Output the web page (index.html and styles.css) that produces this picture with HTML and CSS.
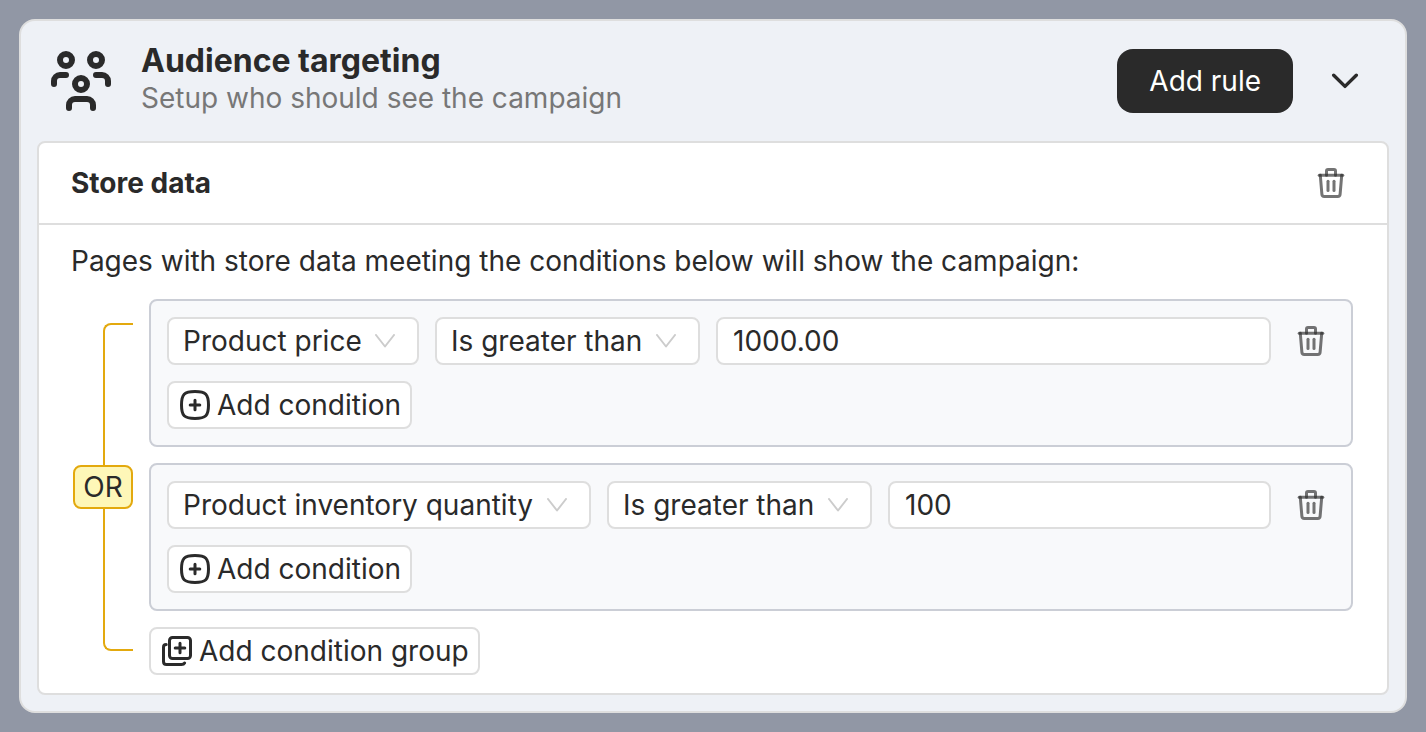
FILE: index.html
```
<!DOCTYPE html>
<html lang="en">
  <head>
    <meta charset="utf-8">
    <title>Audience targeting</title>
    <link rel="stylesheet" href="styles.css">
  </head>
  <body>

    <!-- shared icons -->
    <svg class="sprite" aria-hidden="true">
      <symbol id="icon-trash" viewBox="0 0 32 32">
        <path d="M4.2 8.3H27.8"></path>
        <path d="M11.5 8.3V4Q11.5 2.5 13 2.5H19Q20.5 2.5 20.5 4V8.3"></path>
        <path d="M5.3 8.3L6.9 27.4Q7.1 29.5 9.2 29.5H22.8Q24.9 29.5 25.1 27.4L26.7 8.3"></path>
        <path d="M13 14.3V23.5"></path>
        <path d="M19 14.3V23.5"></path>
      </symbol>
      <symbol id="icon-plus" viewBox="0 0 32 32">
        <path d="M2.5 16C2.5 5.2 5.2 2.5 16 2.5S29.5 5.2 29.5 16S26.8 29.5 16 29.5S2.5 26.8 2.5 16Z"></path>
        <path d="M16 11.2V20.8M11.2 16H20.8"></path>
      </symbol>
      <symbol id="icon-down" viewBox="0 0 20 14">
        <path d="M1 1L10 12.5L19 1"></path>
      </symbol>
    </svg>

    <section class="card">
      <header class="card-header">
        <svg class="icon-audience" viewBox="0 0 20 20" aria-hidden="true">
          <circle cx="5" cy="3" r="2"></circle>
          <circle cx="15" cy="3" r="2"></circle>
          <circle cx="10" cy="11" r="2"></circle>
          <path d="M1 11V10A2 2 0 0 1 3 8H5"></path>
          <path d="M15 8H17A2 2 0 0 1 19 10V11"></path>
          <path d="M6 19V18A2 2 0 0 1 8 16H12A2 2 0 0 1 14 18V19"></path>
        </svg>
        <div class="heading">
          <h1>Audience targeting</h1>
          <p>Setup who should see the campaign</p>
        </div>
        <button type="button" class="add-rule">Add rule</button>
        <button type="button" class="toggle" aria-label="Collapse">
          <svg viewBox="0 0 28 16" aria-hidden="true"><path stroke-width="3.4" d="M2.7 2.2L14 13.4L25.3 2.2"></path></svg>
        </button>
      </header>

      <div class="rule">
        <div class="rule-header">
          <h2>Store data</h2>
          <button type="button" class="remove" aria-label="Remove rule">
            <svg aria-hidden="true"><use href="#icon-trash"></use></svg>
          </button>
        </div>

        <div class="rule-body">
          <p>Pages with store data meeting the conditions below will show the campaign:</p>

          <div class="conditions">
            <div class="bracket">
              <div class="line line-top"></div>
              <span class="operator">OR</span>
              <div class="line line-bottom"></div>
            </div>

            <div class="groups">
              <div class="group">
                <div class="condition">
                  <div class="select">
                    <select aria-label="Property"><option>Product price</option></select>
                    <svg aria-hidden="true"><use href="#icon-down"></use></svg>
                  </div>
                  <div class="select">
                    <select aria-label="Comparison"><option>Is greater than</option></select>
                    <svg aria-hidden="true"><use href="#icon-down"></use></svg>
                  </div>
                  <input type="text" value="1000.00" aria-label="Value">
                  <button type="button" class="remove" aria-label="Remove condition">
                    <svg aria-hidden="true"><use href="#icon-trash"></use></svg>
                  </button>
                </div>
                <button type="button" class="add">
                  <svg aria-hidden="true"><use href="#icon-plus"></use></svg>
                  Add condition
                </button>
              </div>

              <div class="group">
                <div class="condition">
                  <div class="select">
                    <select aria-label="Property"><option>Product inventory quantity</option></select>
                    <svg aria-hidden="true"><use href="#icon-down"></use></svg>
                  </div>
                  <div class="select">
                    <select aria-label="Comparison"><option>Is greater than</option></select>
                    <svg aria-hidden="true"><use href="#icon-down"></use></svg>
                  </div>
                  <input type="text" value="100" aria-label="Value">
                  <button type="button" class="remove" aria-label="Remove condition">
                    <svg aria-hidden="true"><use href="#icon-trash"></use></svg>
                  </button>
                </div>
                <button type="button" class="add">
                  <svg aria-hidden="true"><use href="#icon-plus"></use></svg>
                  Add condition
                </button>
              </div>

              <button type="button" class="add">
                <svg viewBox="0 0 32 32" aria-hidden="true">
                  <rect x="8.5" y="2.5" width="21" height="21" rx="3"></rect>
                  <path d="M19 8.2V17.8M14.2 13H23.8"></path>
                  <path d="M5.2 9.5Q2.5 9.5 2.5 12.2V26.5Q2.5 29.5 5.5 29.5H20.5Q22.8 29.5 23.6 28"></path>
                </svg>
                Add condition group
              </button>
            </div>
          </div>
        </div>
      </div>
    </section>

  </body>
</html>
```
FILE: styles.css
```
* {
  box-sizing: border-box;
}
body {
  margin: 0;
  padding: 19px;
  background-color: #9197a5;
  color: #2a2a2a;
  font: 28px/36px Inter, sans-serif;
}
h1, h2, p {
  margin: 0;
}
button, input, select {
  font: inherit;
  color: inherit;
}
button {
  display: flex;
  align-items: center;
  justify-content: center;
  flex: none;
  padding: 0;
  border: 0;
  background: none;
  cursor: pointer;
}
svg {
  flex: none;
  fill: none;
  stroke: currentColor;
  stroke-width: 3;
  stroke-linecap: round;
  stroke-linejoin: round;
}
.sprite {
  display: none;
}

.card {
  padding: 0 16px 16px;
  border: 2px solid #dedede;
  border-radius: 16px;
  background-color: #eef1f6;
}
.card-header {
  display: flex;
  align-items: center;
  height: 120px;
  padding: 0 12px 0 14px;
}
.icon-audience {
  width: 60px;
  height: 60px;
  stroke-width: 2;
}
.heading {
  flex: 1;
  padding: 0 30px 4px;
}
.heading h1 {
  font-size: 32px;
  line-height: 38px;
  font-weight: 700;
}
.heading p {
  color: #777;
}
.add-rule {
  height: 64px;
  padding: 0 32px;
  border-radius: 16px;
  background-color: #2a2a2a;
  color: white;
}
.toggle {
  width: 64px;
  height: 64px;
  margin-left: 20px;
}
.toggle svg {
  width: 28px;
  height: 16px;
}

.rule {
  border: 2px solid #dedede;
  border-radius: 8px;
  background-color: white;
}
.rule-header {
  display: flex;
  align-items: center;
  justify-content: space-between;
  height: 82px;
  padding: 0 32px;
  border-bottom: 2px solid #dedede;
}
.rule-header h2 {
  font-size: 28px;
  font-weight: 700;
}
.rule-body {
  padding: 18px 34px 18px 32px;
}
.remove {
  width: 48px;
  height: 48px;
}
.remove svg {
  width: 32px;
  height: 32px;
  stroke-opacity: 0.65;
}

.conditions {
  display: flex;
  gap: 16px;
  margin-top: 20px;
}
.bracket {
  display: flex;
  flex-direction: column;
  align-items: flex-end;
  width: 62px;
  padding: 24px 0;
}
.line {
  flex: 1;
  width: 30px;
  border: 0 solid #e3a90e;
  border-left-width: 2px;
}
.line-top {
  border-top-width: 2px;
  border-top-left-radius: 8px;
}
.line-bottom {
  border-bottom-width: 2px;
  border-bottom-left-radius: 8px;
}
.operator {
  width: 60px;
  height: 44px;
  border: 2px solid #e3a90e;
  border-radius: 8px;
  background-color: #fef7b8;
  line-height: 40px;
  text-align: center;
}
.groups {
  display: flex;
  flex: 1;
  flex-direction: column;
  align-items: flex-start;
  gap: 16px;
  min-width: 0;
}
.group {
  display: flex;
  flex-direction: column;
  align-items: flex-start;
  gap: 16px;
  width: 100%;
  padding: 16px;
  border: 2px solid #cbced6;
  border-radius: 8px;
  background-color: #f8f9fb;
}
.condition {
  display: flex;
  gap: 16px;
  width: 100%;
}
.condition input,
.select select,
.add {
  height: 48px;
  border: 2px solid #dedede;
  border-radius: 8px;
  background-color: white;
}
.condition input {
  flex: 1;
  min-width: 0;
  padding: 0 15px;
}
.select {
  display: grid;
  align-items: center;
}
.select select,
.select svg {
  grid-area: 1 / 1;
}
.select select {
  appearance: none;
  padding: 0 55px 0 14px;
}
.select svg {
  justify-self: end;
  width: 20px;
  height: 14px;
  margin-right: 24px;
  color: #ccc;
  stroke-width: 2;
  pointer-events: none;
}
.add {
  gap: 6px;
  padding: 0 9px 0 10px;
}
.add svg {
  width: 32px;
  height: 32px;
}
```
